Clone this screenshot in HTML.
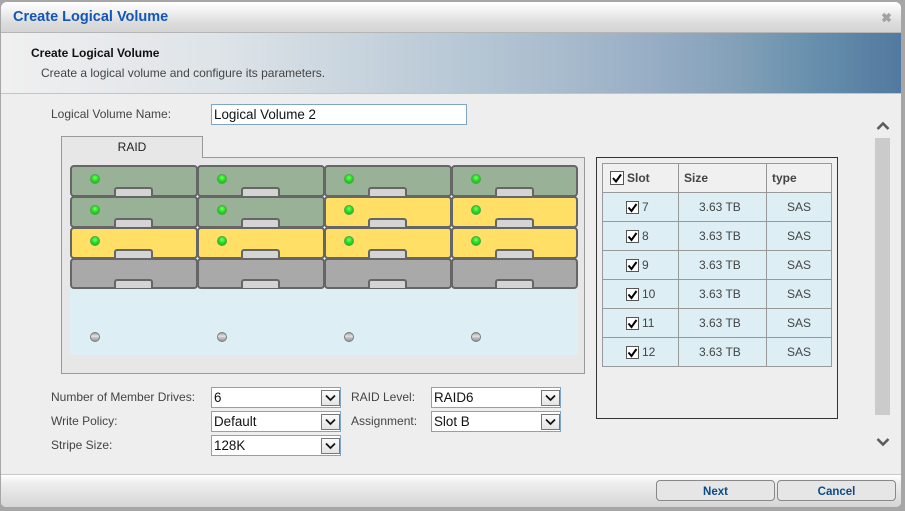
<!DOCTYPE html>
<html><head><meta charset="utf-8"><style>
html,body{margin:0;padding:0}
body{width:905px;height:511px;position:relative;overflow:hidden;background:#a6a6a6;font-family:"Liberation Sans",Arial,sans-serif;font-size:12px;color:#444}
div,span{position:absolute;box-sizing:border-box;white-space:nowrap}
.dlg{left:1px;top:2px;width:900px;height:505px;background:#eee;border-radius:6px 6px 5px 5px;overflow:hidden}
.tb{left:0;top:0;width:900px;height:31px;background:linear-gradient(#fff 0,#f4f4f4 25%,#dcdcdc 70%,#d4d4d4 100%);border-bottom:1px solid #b5b5b5}
.hd{left:0;top:31px;width:900px;height:61px;background:linear-gradient(90deg,#f0f0f0 0,#dde3e8 25%,#b9c9d6 50%,#a9bccd 62%,#98aec5 72%,#82a0b8 82%,#6890ad 90%,#52799f 100%);border-bottom:1px solid #c4c4c4}
.ft{left:0;top:472px;width:900px;height:33px;background:linear-gradient(#fff 0,#eee 25%,#d6d6d6 100%);border-top:1px solid #c8c8c8}
.l{height:14px;line-height:14px;font-size:12px;color:#444}
.inp{background:#fff;border:1px solid #7fa5c3;font-size:13.4px;color:#111;line-height:19px;padding-left:2px}
.arr{right:0;top:2px;width:19px;height:16px;background:linear-gradient(#fbfbfb,#e4e4e4);border:1px solid #777}
.panel{left:61px;top:157px;width:524px;height:217px;background:#e7e7e7;border:1px solid #999}
.tab{left:61px;top:136px;width:142px;height:22px;background:#e7e7e7;border:1px solid #999;border-bottom:0;text-align:center;line-height:20px;color:#222;font-size:12px}
.bay{left:70px;top:165px;width:508px;height:190px;background:#ddeef5}
.d{width:128px;height:32px;border:2px solid #666;border-radius:4px}
.e{width:127px}
.s{height:31px}
.g{background:#99b196}.y{background:#ffdf66}.k{background:#a9a9a9}
.h{left:42px;top:20px;width:39px;height:9px;background:#d4d4d4;border:2px solid #666;border-bottom:0;border-radius:3px 3px 0 0}
.s .h{top:19px}
.led{width:10px;height:10px;border-radius:50%;background:radial-gradient(circle at 50% 35%,#7dff6a 0,#28e024 45%,#12a812 100%);border:1px solid #4aa845}
.led.o{background:linear-gradient(#a0a0a0 0,#e4e4e4 40%,#c8c8c8 55%,#969696 100%);border:1px solid #7c7c7c}
.box{left:596px;top:157px;width:242px;height:262px;border:1px solid #333}
.c{height:30px;border:1px solid #999;line-height:29px;color:#444}
.hc{background:#f0f0f0;font-weight:bold;padding-left:5px;color:#444}
.bc{background:#ddeef5;text-align:center}
.sl{text-align:left;padding-left:39px}
.sz{text-align:left;padding-left:20px}
.btn{top:480px;height:21px;width:119px;border:1px solid #888;border-radius:4px;background:#e6e6e6;text-align:center;line-height:22px;font-weight:bold;font-size:11.5px;color:#0d4a86}
</style></head><body>
<div class="dlg">
<div class="tb"></div><div class="hd"></div><div class="ft"></div>
</div>
<div style="left:13px;top:9px;font-size:14.5px;font-weight:bold;color:#1256b8;line-height:16px">Create Logical Volume</div>
<svg style="position:absolute;left:881px;top:12px" width="11" height="11" viewBox="0 0 11 11"><path d="M2 2L9 9M9 2L2 9" stroke="#a2a2a2" stroke-width="3.5"/></svg>
<div class="l" style="left:31px;top:46px;font-weight:bold;color:#111">Create Logical Volume</div>
<div class="l" style="left:41px;top:66px;color:#444">Create a logical volume and configure its parameters.</div>
<div class="l" style="left:51px;top:107px">Logical Volume Name:</div>
<div class="inp" style="left:211px;top:104px;width:256px;height:21px">Logical Volume 2</div>

<div class="panel"></div><div class="tab">RAID</div>
<div class="bay"></div>
<div class="d g" style="left:70px;top:165px"><div class="h"></div></div>
<div class="d g" style="left:197px;top:165px"><div class="h"></div></div>
<div class="d g" style="left:324px;top:165px"><div class="h"></div></div>
<div class="d g e" style="left:451px;top:165px"><div class="h"></div></div>
<div class="d g" style="left:70px;top:196px"><div class="h"></div></div>
<div class="d g" style="left:197px;top:196px"><div class="h"></div></div>
<div class="d y" style="left:324px;top:196px"><div class="h"></div></div>
<div class="d y e" style="left:451px;top:196px"><div class="h"></div></div>
<div class="d y" style="left:70px;top:227px"><div class="h"></div></div>
<div class="d y" style="left:197px;top:227px"><div class="h"></div></div>
<div class="d y" style="left:324px;top:227px"><div class="h"></div></div>
<div class="d y e" style="left:451px;top:227px"><div class="h"></div></div>
<div class="d k s" style="left:70px;top:258px"><div class="h"></div></div>
<div class="d k s" style="left:197px;top:258px"><div class="h"></div></div>
<div class="d k s" style="left:324px;top:258px"><div class="h"></div></div>
<div class="d k s e" style="left:451px;top:258px"><div class="h"></div></div>

<div class="led" style="left:90px;top:174px"></div><div class="led" style="left:217px;top:174px"></div><div class="led" style="left:344px;top:174px"></div><div class="led" style="left:471px;top:174px"></div>
<div class="led" style="left:90px;top:205px"></div><div class="led" style="left:217px;top:205px"></div><div class="led" style="left:344px;top:205px"></div><div class="led" style="left:471px;top:205px"></div>
<div class="led" style="left:90px;top:236px"></div><div class="led" style="left:217px;top:236px"></div><div class="led" style="left:344px;top:236px"></div><div class="led" style="left:471px;top:236px"></div>
<div class="led o" style="left:90px;top:332px"></div><div class="led o" style="left:217px;top:332px"></div><div class="led o" style="left:344px;top:332px"></div><div class="led o" style="left:471px;top:332px"></div>

<div class="box"></div>
<div class="c hc" style="left:602px;top:163px;width:77px;padding-left:24px">Slot</div>
<div class="c hc" style="left:678px;top:163px;width:89px">Size</div>
<div class="c hc" style="left:766px;top:163px;width:66px">type</div>
<svg style="position:absolute;left:610px;top:171px" width="14" height="14" viewBox="0 0 14 14"><rect x=".5" y=".5" width="13" height="13" fill="#fff" stroke="#555"/><path d="M3 7L6 10.5L11 3.5" fill="none" stroke="#000" stroke-width="2"/></svg>

<div class="c bc sl" style="left:602px;top:192px;width:77px">7</div><div class="c bc sz" style="left:678px;top:192px;width:89px">3.63 TB</div><div class="c bc" style="left:766px;top:192px;width:66px">SAS</div>
<div class="c bc sl" style="left:602px;top:221px;width:77px">8</div><div class="c bc sz" style="left:678px;top:221px;width:89px">3.63 TB</div><div class="c bc" style="left:766px;top:221px;width:66px">SAS</div>
<div class="c bc sl" style="left:602px;top:250px;width:77px">9</div><div class="c bc sz" style="left:678px;top:250px;width:89px">3.63 TB</div><div class="c bc" style="left:766px;top:250px;width:66px">SAS</div>
<div class="c bc sl" style="left:602px;top:279px;width:77px">10</div><div class="c bc sz" style="left:678px;top:279px;width:89px">3.63 TB</div><div class="c bc" style="left:766px;top:279px;width:66px">SAS</div>
<div class="c bc sl" style="left:602px;top:308px;width:77px">11</div><div class="c bc sz" style="left:678px;top:308px;width:89px">3.63 TB</div><div class="c bc" style="left:766px;top:308px;width:66px">SAS</div>
<div class="c bc sl" style="left:602px;top:337px;width:77px">12</div><div class="c bc sz" style="left:678px;top:337px;width:89px">3.63 TB</div><div class="c bc" style="left:766px;top:337px;width:66px">SAS</div>
<svg style="position:absolute;left:626px;top:201px" width="14" height="160" viewBox="0 0 14 160"><g><rect x=".5" y=".5" width="12" height="12" fill="#fff" stroke="#555"/><path d="M2.5 6.5L5.5 10L10.5 3" fill="none" stroke="#000" stroke-width="2"/></g>
<g transform="translate(0,29)"><rect x=".5" y=".5" width="12" height="12" fill="#fff" stroke="#555"/><path d="M2.5 6.5L5.5 10L10.5 3" fill="none" stroke="#000" stroke-width="2"/></g>
<g transform="translate(0,58)"><rect x=".5" y=".5" width="12" height="12" fill="#fff" stroke="#555"/><path d="M2.5 6.5L5.5 10L10.5 3" fill="none" stroke="#000" stroke-width="2"/></g>
<g transform="translate(0,87)"><rect x=".5" y=".5" width="12" height="12" fill="#fff" stroke="#555"/><path d="M2.5 6.5L5.5 10L10.5 3" fill="none" stroke="#000" stroke-width="2"/></g>
<g transform="translate(0,116)"><rect x=".5" y=".5" width="12" height="12" fill="#fff" stroke="#555"/><path d="M2.5 6.5L5.5 10L10.5 3" fill="none" stroke="#000" stroke-width="2"/></g>
<g transform="translate(0,145)"><rect x=".5" y=".5" width="12" height="12" fill="#fff" stroke="#555"/><path d="M2.5 6.5L5.5 10L10.5 3" fill="none" stroke="#000" stroke-width="2"/></g></svg>

<div style="left:875px;top:138px;width:15px;height:277px;background:#cbcbcb"></div>
<svg style="position:absolute;left:876px;top:120px" width="14" height="12" viewBox="0 0 14 12"><path d="M1.5 9L7 3.5L12.5 9" fill="none" stroke="#5c5c5c" stroke-width="2.6"/></svg>
<svg style="position:absolute;left:876px;top:436px" width="14" height="12" viewBox="0 0 14 12"><path d="M1.5 3L7 8.5L12.5 3" fill="none" stroke="#5c5c5c" stroke-width="2.6"/></svg>

<div class="l" style="left:51px;top:390px">Number of Member Drives:</div>
<div class="l" style="left:51px;top:414px">Write Policy:</div>
<div class="l" style="left:51px;top:438px">Stripe Size:</div>
<div class="l" style="left:351px;top:390px">RAID Level:</div>
<div class="l" style="left:351px;top:414px">Assignment:</div>

<div class="inp" style="left:211px;top:387px;width:130px;height:21px">6<div class="arr"><svg style="position:absolute;left:3px;top:3px" width="11" height="8" viewBox="0 0 11 8"><path d="M1 1.5L5.5 6L10 1.5" fill="none" stroke="#111" stroke-width="1.7"/></svg></div></div>
<div class="inp" style="left:211px;top:411px;width:130px;height:21px">Default<div class="arr"><svg style="position:absolute;left:3px;top:3px" width="11" height="8" viewBox="0 0 11 8"><path d="M1 1.5L5.5 6L10 1.5" fill="none" stroke="#111" stroke-width="1.7"/></svg></div></div>
<div class="inp" style="left:211px;top:435px;width:130px;height:21px">128K<div class="arr"><svg style="position:absolute;left:3px;top:3px" width="11" height="8" viewBox="0 0 11 8"><path d="M1 1.5L5.5 6L10 1.5" fill="none" stroke="#111" stroke-width="1.7"/></svg></div></div>
<div class="inp" style="left:431px;top:387px;width:130px;height:21px">RAID6<div class="arr"><svg style="position:absolute;left:3px;top:3px" width="11" height="8" viewBox="0 0 11 8"><path d="M1 1.5L5.5 6L10 1.5" fill="none" stroke="#111" stroke-width="1.7"/></svg></div></div>
<div class="inp" style="left:431px;top:411px;width:130px;height:21px">Slot B<div class="arr"><svg style="position:absolute;left:3px;top:3px" width="11" height="8" viewBox="0 0 11 8"><path d="M1 1.5L5.5 6L10 1.5" fill="none" stroke="#111" stroke-width="1.7"/></svg></div></div>

<div class="btn" style="left:656px">Next</div>
<div class="btn" style="left:777px">Cancel</div>
</body></html>
